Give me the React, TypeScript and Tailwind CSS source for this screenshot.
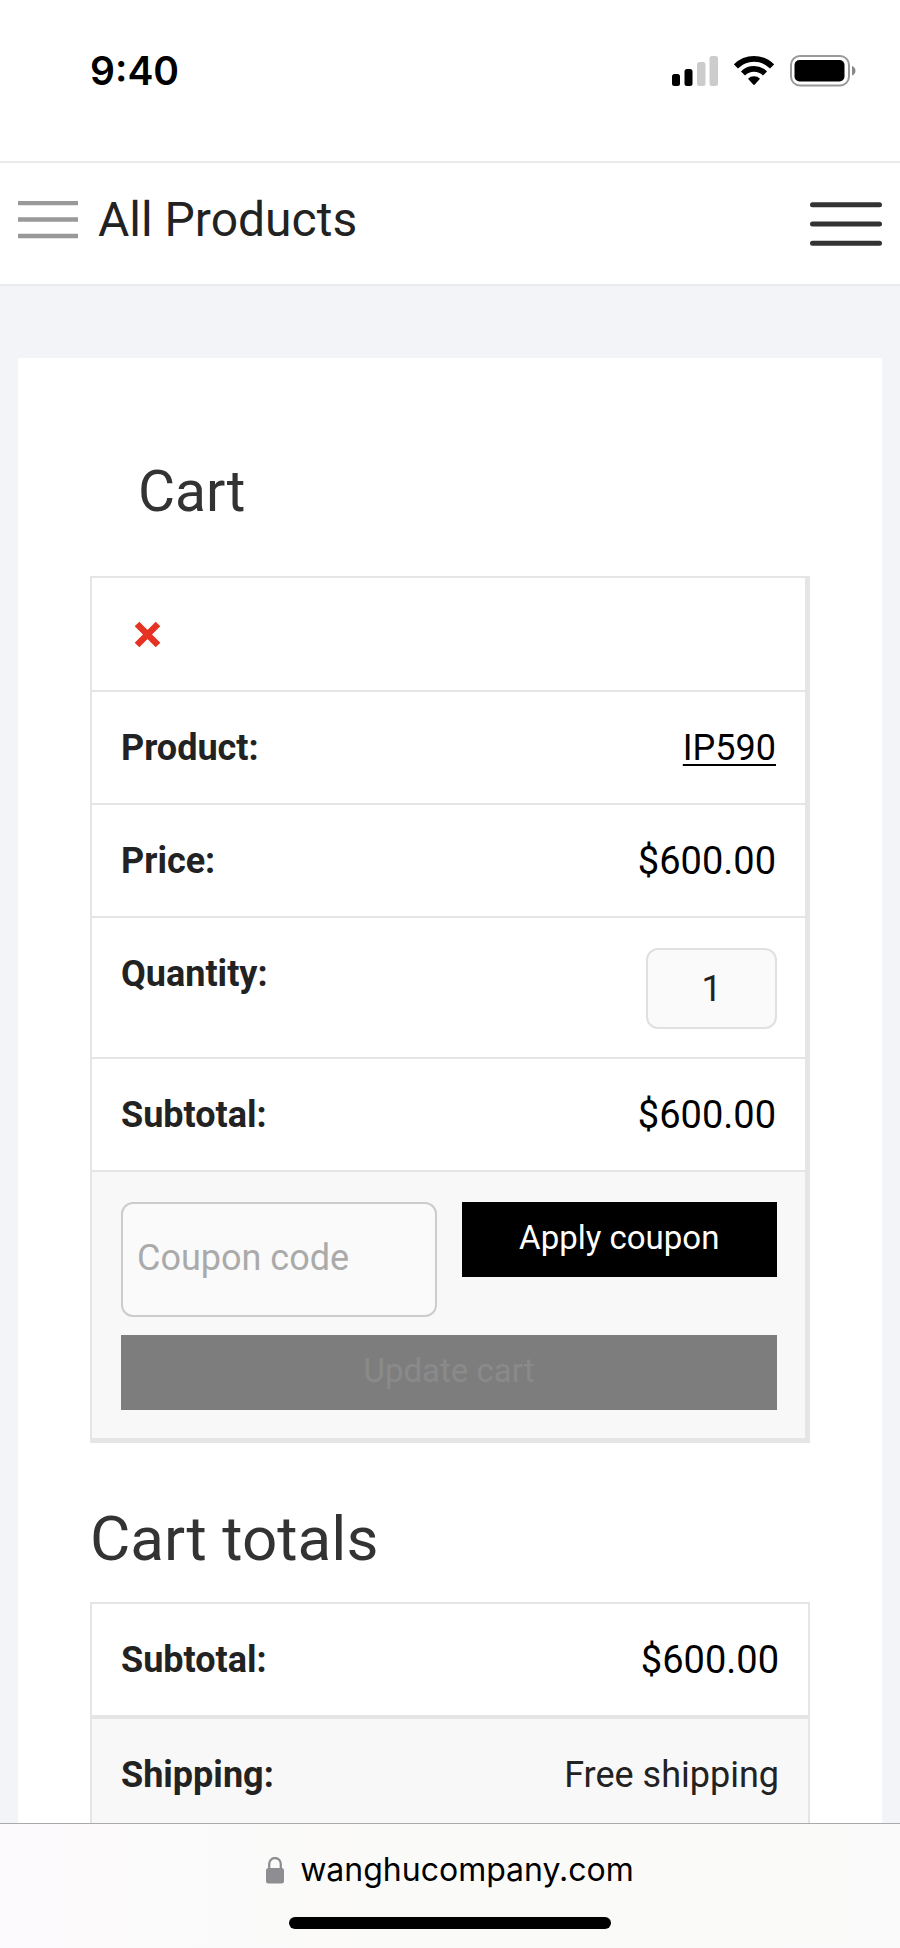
// Cart page — mobile cart view with the phone status bar and the browser bar
import { useState } from "react";

const labelCell = "pt-[30px] pb-[28px] pl-[29px] text-left align-top text-[36px] leading-[53px] font-bold text-[#222]";
const priceCell = "pt-[30px] pb-[28px] pr-[29px] text-right align-top text-[38px] leading-[53px] text-black";
const textCell = "pt-[30px] pb-[28px] pr-[29px] text-right align-top text-[36px] leading-[53px] text-[#222]";

function StatusBar() {
  return (
    <div className="flex shrink-0 items-center justify-between border-b-2 border-[#ebebeb] pt-[51px] pr-11 pb-[70px] pl-[90px]">
      <span className="font-['Inter',sans-serif] text-[39px] leading-10 font-semibold text-black">9:40</span>
      <div className="flex items-center gap-4">
        <svg width="47" height="32" viewBox="0 0 47 32" aria-label="Signal">
          <rect x="1" y="19" width="8" height="12" rx="2.5" fill="#000" />
          <rect x="13.5" y="14" width="8" height="17" rx="2.5" fill="#000" />
          <rect x="26" y="7" width="8.5" height="24" rx="2.5" fill="#ccc" />
          <rect x="38.5" y="1" width="8.5" height="30" rx="2.5" fill="#ccc" />
        </svg>
        <svg width="40" height="32" viewBox="0 -1 40 32" aria-label="Wi-Fi">
          <g fill="none" stroke="#000" strokeWidth="5.8">
            <path d="M1.9 10.4a25.6 25.6 0 0 1 36.2 0" />
            <path d="M9 17.5a15.6 15.6 0 0 1 22 0" />
          </g>
          <path d="M14 22.7a8.5 8.5 0 0 1 12 0l-5.2 5.9q-.8.8-1.6 0z" fill="#000" />
        </svg>
        <svg width="66" height="32" viewBox="0 0 66 32" aria-label="Battery">
          <rect x="1" y="1" width="58" height="29.5" rx="9" fill="none" stroke="#999" strokeWidth="2" />
          <rect x="4.5" y="5" width="50" height="21.5" rx="5" fill="#000" />
          <path d="M62 11q3.5 1.500 3.5 4.8T62 20.5z" fill="#888" />
        </svg>
      </div>
    </div>
  );
}

function Header() {
  return (
    <header className="flex h-[123px] shrink-0 items-center justify-between border-b-2 border-[#eaebed] bg-white px-[18px]">
      <a href="#products" className="flex items-center gap-5 pb-2 text-[48px] leading-[56px] text-[#222]">
        <svg width="60" height="38" viewBox="0 0 60 38" aria-hidden="true">
          <path d="M0 2h60M0 18.5h60M0 35h60" stroke="#999" strokeWidth="4.6" />
        </svg>
        All Products
      </a>
      <button type="button" aria-label="Menu">
        <svg width="72" height="44" viewBox="0 0 72 44">
          <path d="M2.5 2.7h67M2.5 22h67M2.5 41.3h67" stroke="#333" strokeWidth="5" strokeLinecap="round" />
        </svg>
      </button>
    </header>
  );
}

function CartTable() {
  const [quantity, setQuantity] = useState("1");
  const [coupon, setCoupon] = useState("");

  return (
    <table className="w-full border-separate border-spacing-0 border-2 border-r-[5px] border-b-[5px] border-[#e5e5e5] [&_tr:not(:last-child)>*]:border-b-2 [&_tr>*]:border-[#e5e5e5]">
      <tbody>
        <tr>
          <td colSpan={2} className="h-[114px] pl-[42px] align-middle">
            <button type="button" aria-label="Remove item" className="block">
              <svg width="27" height="27" viewBox="0 0 27 27">
                <path d="M3 3l21 21M24 3L3 24" stroke="#e63223" strokeWidth="6.5" />
              </svg>
            </button>
          </td>
        </tr>
        <tr>
          <th scope="row" className={labelCell}>Product:</th>
          <td className={textCell}>
            <a href="#ip590" className="text-black underline decoration-2 underline-offset-4">IP590</a>
          </td>
        </tr>
        <tr>
          <th scope="row" className={labelCell}>Price:</th>
          <td className={priceCell}>$600.00</td>
        </tr>
        <tr>
          <th scope="row" className={labelCell}>
            <label htmlFor="quantity">Quantity:</label>
          </th>
          <td className="pt-[30px] pr-[28px] pb-[28px] align-top">
            <input
              id="quantity"
              type="text"
              inputMode="numeric"
              value={quantity}
              onChange={(e) => setQuantity(e.target.value)}
              className="ml-auto block h-[81px] w-[131px] rounded-xl border-2 border-[#e0e0e0] bg-[#fafafa] text-center text-[36px] text-[#222]"
            />
          </td>
        </tr>
        <tr>
          <th scope="row" className={labelCell}>Subtotal:</th>
          <td className={priceCell}>$600.00</td>
        </tr>
        <tr>
          <td colSpan={2} className="bg-[#f8f8f8] pt-[30px] pr-[28px] pb-[28px] pl-[29px]">
            <div className="grid grid-cols-2 items-start gap-[25px]">
              <input
                type="text"
                aria-label="Coupon code"
                placeholder="Coupon code"
                value={coupon}
                onChange={(e) => setCoupon(e.target.value)}
                className="h-[115px] w-full rounded-xl border-2 border-[#ccc] bg-[#fafafa] px-[14px] pb-1 text-[36px] text-[#222] placeholder:text-[#aaa]"
              />
              <button type="button" className="h-[75px] bg-black pb-1 text-[33px] text-white">
                Apply coupon
              </button>
            </div>
            <button type="button" disabled className="mt-[18px] block h-[75px] w-full bg-[#7d7d7d] pb-1 text-[33px] text-[#8a8a8a]">
              Update cart
            </button>
          </td>
        </tr>
      </tbody>
    </table>
  );
}

function CartTotals() {
  return (
    <section>
      <h2 className="pt-[54px] pb-[21px] text-[62px] leading-[84px] text-[#333]">Cart totals</h2>
      <table className="w-full border-separate border-spacing-0 border-2 border-[#e5e5e5]">
        <tbody>
          <tr className="[&>*]:border-b-4 [&>*]:border-[#e5e5e5]">
            <th scope="row" className={labelCell}>Subtotal:</th>
            <td className={priceCell}>$600.00</td>
          </tr>
          <tr className="bg-[#f8f8f8]">
            <th scope="row" className={labelCell}>Shipping:</th>
            <td className={textCell}>Free shipping</td>
          </tr>
        </tbody>
      </table>
    </section>
  );
}

function BrowserBar() {
  return (
    <footer className="flex h-[125px] shrink-0 flex-col items-center border-t border-[#aaa] bg-linear-to-r from-[#fcfafc] via-[#fafaf8] to-[#fafafa] pt-6">
      <div className="flex items-center gap-4">
        <svg width="18" height="27" viewBox="0 0 18 27" aria-hidden="true">
          <path d="M3.2 12V7a5.8 6 0 0 1 11.6 0v5" fill="none" stroke="#8e8d91" strokeWidth="2.3" />
          <rect x="0" y="11" width="18" height="15.5" rx="2.5" fill="#8e8d91" />
        </svg>
        <span className="font-['Inter',sans-serif] text-[32px] leading-[44px] text-black">wanghucompany.com</span>
      </div>
      <div className="mt-[25px] h-3 w-[322px] rounded-full bg-black" />
    </footer>
  );
}

export default function App() {
  return (
    <div className="flex h-screen flex-col bg-white font-['Roboto',sans-serif]">
      <StatusBar />
      <Header />
      <main className="min-h-0 flex-1 overflow-hidden bg-[#f3f4f8] px-[18px] pt-[72px]">
        <div className="min-h-full bg-white px-[72px] pt-[92px]">
          <h1 className="pb-[42px] pl-12 text-[57px] leading-[84px] text-[#333]">Cart</h1>
          <CartTable />
          <CartTotals />
        </div>
      </main>
      <BrowserBar />
    </div>
  );
}
